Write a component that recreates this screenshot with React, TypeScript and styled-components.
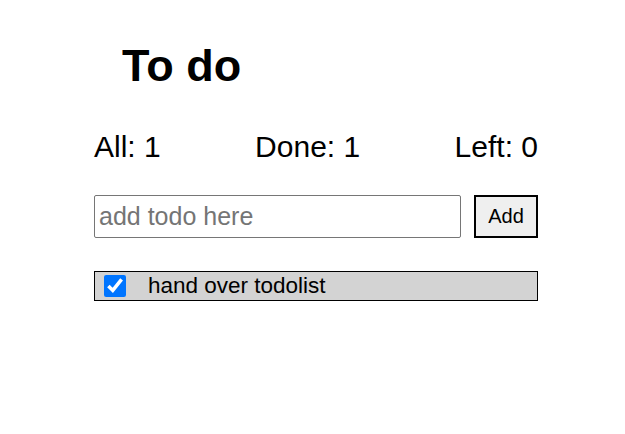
import React, { useState } from "react";
import styled, { createGlobalStyle } from "styled-components";

interface Todo {
  id: number;
  text: string;
  done: boolean;
}

const App: React.FC = () => {
  const [todos, setTodos] = useState<Todo[]>([
    { id: 1, text: "hand over todolist", done: true },
  ]);
  const [draft, setDraft] = useState("");

  const doneCount = todos.filter((t) => t.done).length;

  const handleAdd = () => {
    if (!draft.trim()) return;
    setTodos([...todos, { id: Date.now(), text: draft.trim(), done: false }]);
    setDraft("");
  };

  const toggle = (id: number) => {
    setTodos(todos.map((t) => (t.id === id ? { ...t, done: !t.done } : t)));
  };

  return (
    <>
      <GlobalStyle />
      <Wrapper>
        <Title>To do</Title>
        <Stats>
          <span>All: {todos.length}</span>
          <span>Done: {doneCount}</span>
          <span>Left: {todos.length - doneCount}</span>
        </Stats>
        <AddRow>
          <TodoInput
            placeholder="add todo here"
            value={draft}
            onChange={(e) => setDraft(e.target.value)}
          />
          <AddButton onClick={handleAdd}>Add</AddButton>
        </AddRow>
        <List>
          {todos.map((t) => (
            <Item key={t.id}>
              <Check
                type="checkbox"
                checked={t.done}
                onChange={() => toggle(t.id)}
              />
              <ItemText>{t.text}</ItemText>
            </Item>
          ))}
        </List>
      </Wrapper>
    </>
  );
};

export default App;

const GlobalStyle = createGlobalStyle`
  body {
    margin: 0;
    background: white;
    font-family: "Liberation Sans", Arial, sans-serif;
  }
`;

const Wrapper = styled.div`
  width: 444px;
  margin-left: 94px;
  display: flex;
  flex-direction: column;
`;

const Title = styled.h1`
  margin: 36px 0 0 28px;
  font-size: 45px;
  font-weight: bold;
  line-height: 60px;
  color: black;
`;

const Stats = styled.div`
  margin-top: 34px;
  display: flex;
  justify-content: space-between;
  font-size: 30px;
  line-height: 34px;
  color: black;
`;

const AddRow = styled.div`
  margin-top: 31px;
  display: flex;
  gap: 13px;
`;

const TodoInput = styled.input`
  flex: 1;
  height: 43px;
  box-sizing: border-box;
  padding: 1px 4px;
  border: 1px solid #767676;
  border-radius: 2px;
  font-family: "Liberation Sans", Arial, sans-serif;
  font-size: 25px;
  outline: none;

  &::placeholder {
    color: #757575;
  }
`;

const AddButton = styled.button`
  width: 64px;
  height: 43px;
  box-sizing: border-box;
  padding: 0;
  border: 2px solid black;
  background: #efefef;
  font-family: "Liberation Sans", Arial, sans-serif;
  font-size: 20px;
  color: black;
  cursor: pointer;
`;

const List = styled.div`
  margin-top: 33px;
  display: flex;
  flex-direction: column;
`;

const Item = styled.div`
  height: 30px;
  box-sizing: border-box;
  border: 1px solid black;
  background: #d3d3d3;
  display: flex;
  align-items: center;
`;

const Check = styled.input`
  width: 22px;
  height: 22px;
  margin: 0 0 0 9px;
  accent-color: #0075ff;
`;

const ItemText = styled.span`
  margin-left: 22px;
  font-size: 22.5px;
  color: black;
`;
